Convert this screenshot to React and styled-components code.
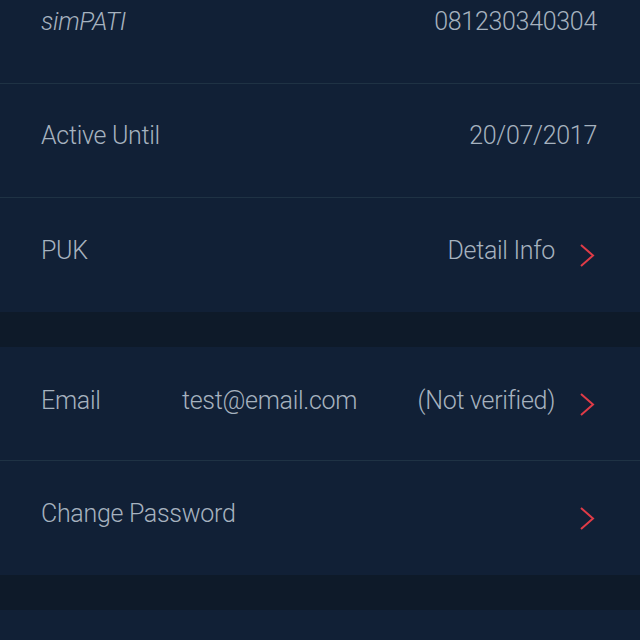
import React from 'react';
import styled, { createGlobalStyle } from 'styled-components';

const GlobalStyle = createGlobalStyle`
  html, body {
    margin: 0;
    padding: 0;
    background: #0e1a29;
    overflow: hidden;
  }
  body {
    font-family: "Roboto", "Liberation Sans", sans-serif;
  }
`;

const Screen = styled.div`
  width: 640px;
  height: 640px;
  overflow: hidden;
  background: #0e1a29;
`;

const List = styled.div`
  margin-top: -30px;
`;

const Group = styled.div`
  background: #112036;
`;

const Spacer = styled.div`
  height: 35px;
  background: #0e1a29;
`;

const Row = styled.div`
  display: flex;
  align-items: center;
  height: 113px;
  padding: 0 43px 0 41px;
  border-bottom: 1px solid #1f3244;
  box-sizing: content-box;

  &:last-child {
    height: 114px;
    border-bottom: none;
  }
`;

const Text = styled.span`
  font-size: 25px;
  font-weight: 300;
  color: #a6b2bf;
  font-style: ${p => (p.italic ? 'italic' : 'normal')};
  letter-spacing: -0.3px;
  white-space: nowrap;
  padding-bottom: ${p => (p.low ? '6px' : '10px')};
`;

const Label = styled(Text)`
  width: ${p => (p.wide ? 'auto' : '141px')};
`;

const Value = styled(Text)`
  margin-left: auto;
`;

const Chevron = styled.svg`
  width: 16px;
  height: 24px;
  margin-left: 24px;
  margin-right: 2px;
  flex-shrink: 0;
`;

const Arrow = () => (
  <Chevron viewBox="0 0 16 24">
    <path d="M2 2 L14 12.5 L2 23" fill="none" stroke="#df3b47" strokeWidth="2" />
  </Chevron>
);

export default function App() {
  return (
    <Screen>
      <GlobalStyle />
      <List>
        <Group>
          <Row>
            <Label italic>simPATI</Label>
            <Value>081230340304</Value>
          </Row>
          <Row>
            <Label wide>Active Until</Label>
            <Value>20/07/2017</Value>
          </Row>
          <Row>
            <Label>PUK</Label>
            <Value>Detail Info</Value>
            <Arrow />
          </Row>
        </Group>
        <Spacer />
        <Group>
          <Row>
            <Label low>Email</Label>
            <Text low>test@email.com</Text>
            <Value low>(Not verified)</Value>
            <Arrow />
          </Row>
          <Row>
            <Label wide>Change Password</Label>
            <Value />
            <Arrow />
          </Row>
        </Group>
        <Spacer />
        <Group>
          <Row />
        </Group>
      </List>
    </Screen>
  );
}
